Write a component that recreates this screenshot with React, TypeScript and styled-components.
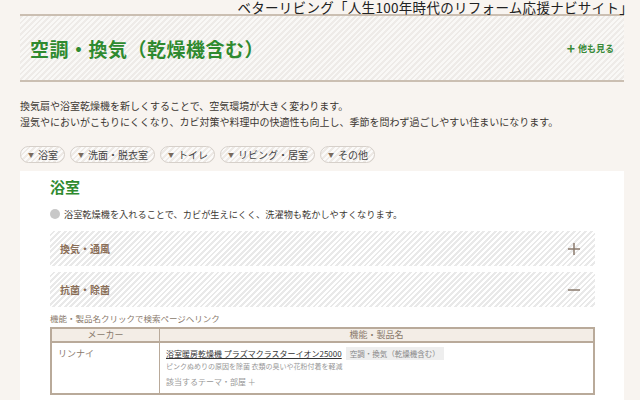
import React from 'react';
import styled, { createGlobalStyle } from 'styled-components';

const GlobalStyle = createGlobalStyle`
  html, body {
    margin: 0;
    padding: 0;
    background: #f8f4f0;
    font-family: "Noto Sans CJK JP", "Noto Sans", sans-serif;
    color: #3a3a3a;
  }
`;

const stripes = (a: string, b: string) => `repeating-linear-gradient(-45deg, ${a} 0 2px, ${b} 2px 4px)`;

const Page = styled.div`
  width: 640px;
  height: 400px;
  overflow: hidden;
`;

const SiteTitle = styled.div`
  font-size: 13.5px;
  line-height: 15px;
  height: 15px;
  margin-bottom: -1px;
  text-align: right;
  padding-right: 7px;
  color: #222;
  letter-spacing: 0.3px;
  white-space: nowrap;
`;

const Header = styled.div`
  margin: 0 16px 0 20px;
  height: 64px;
  border-top: 2px solid #cbbfb2;
  border-bottom: 2px solid #cbbfb2;
  background: ${stripes('#f9f8f6', '#eeebe8')};
  display: flex;
  align-items: center;
  justify-content: space-between;
  padding: 0 10px;
`;

const Title = styled.h1`
  margin: 0;
  font-size: 19px;
  font-weight: 700;
  color: #2f8a2f;
  letter-spacing: 0.5px;
`;

const MoreLink = styled.a`
  display: flex;
  align-items: center;
  gap: 3px;
  font-size: 9px;
  font-weight: 700;
  color: #3a8a3a;
`;

const Plus = styled.span`
  font-size: 14px;
  line-height: 1;
  font-weight: 700;
`;

const Lead = styled.p`
  margin: 16px 0 0 20px;
  font-size: 10px;
  line-height: 16px;
  color: #3d3833;
`;

const Tags = styled.div`
  display: flex;
  gap: 5px;
  margin: 16px 0 0 20px;
`;

const Tag = styled.span`
  display: inline-flex;
  align-items: center;
  gap: 4px;
  height: 15px;
  padding: 0 6px 0 7px;
  border: 1px solid #d6d0ca;
  border-radius: 9px;
  background: ${stripes('#fbfaf9', '#eeeae6')};
  font-size: 10px;
  color: #444;
`;

const Tri = styled.span`
  font-size: 6px;
  color: #7a6a5c;
`;

const Card = styled.section`
  margin: 8px 16px 0 20px;
  background: #fff;
  padding: 6px 29px 10px 30px;
  height: 226px;
`;

const SubTitle = styled.h2`
  margin: 0;
  font-size: 15px;
  line-height: 20px;
  font-weight: 700;
  color: #2f8a2f;
`;

const Note = styled.p`
  margin: 10px 0 0;
  display: flex;
  align-items: center;
  gap: 4px;
  font-size: 9.2px;
  color: #3d3833;
`;

const Dot = styled.span`
  width: 10px;
  height: 10px;
  border-radius: 50%;
  background: #c8c8c8;
`;

const Accordion = styled.div`
  margin-top: 10px;
  display: flex;
  flex-direction: column;
  gap: 6px;
`;

const AccRow = styled.div`
  height: 35px;
  background: ${stripes('#ffffff', '#e9e9e9')};
  display: flex;
  align-items: center;
  justify-content: space-between;
  padding: 0 15px 0 10px;
  font-size: 10px;
  font-weight: 700;
  color: #8a6e58;
`;

const Caption = styled.div`
  margin-top: 5px;
  font-size: 8.5px;
  color: #8a7a6c;
`;

const Table = styled.table`
  margin-top: 3px;
  width: 100%;
  border-collapse: collapse;
  border: 2px solid #b9aa9a;
  font-size: 9px;
`;

const Th = styled.th<{ $w?: number }>`
  width: ${({ $w }) => ($w ? `${$w}px` : 'auto')};
  background: #f3ede6;
  border: 1px solid #b9aa9a;
  border-bottom-width: 2px;
  font-weight: 400;
  color: #8a7a6c;
  height: 12px;
  line-height: 12px;
  padding: 0;
`;

const Td = styled.td`
  border: 1px solid #b9aa9a;
  vertical-align: top;
  padding: 5px 6px;
  color: #8a7a6c;
  height: 39px;
  line-height: 12px;
`;

const ProductLink = styled.a`
  font-size: 8px;
  color: #333;
  text-decoration: underline;
`;

const Chip = styled.span`
  margin-left: 4px;
  padding: 1px 4px;
  background: #eeeeee;
  font-size: 7.5px;
  color: #888;
`;

const Line = styled.div<{ $top?: number; $size: number }>`
  margin-top: ${({ $top }) => $top ?? 0}px;
  font-size: ${({ $size }) => $size}px;
  color: #999;
`;

const PlusMinus = ({ open }: { open?: boolean }) => (
  <svg width="12" height="12" viewBox="0 0 12 12">
    <path d={open ? 'M0 6h12' : 'M0 6h12M6 0v12'} stroke="#8a7a6c" strokeWidth="1.5" />
  </svg>
);

export default function App() {
  const tags = ['浴室', '洗面・脱衣室', 'トイレ', 'リビング・居室', 'その他'];
  return (
    <Page>
      <GlobalStyle />
      <SiteTitle>ベターリビング「人生100年時代のリフォーム応援ナビサイト」</SiteTitle>
      <Header>
        <Title>空調・換気（乾燥機含む）</Title>
        <MoreLink>
          <Plus>+</Plus>他も見る
        </MoreLink>
      </Header>
      <Lead>
        換気扇や浴室乾燥機を新しくすることで、空気環境が大きく変わります。
        <br />
        湿気やにおいがこもりにくくなり、カビ対策や料理中の快適性も向上し、季節を問わず過ごしやすい住まいになります。
      </Lead>
      <Tags>
        {tags.map((t) => (
          <Tag key={t}>
            <Tri>▼</Tri>
            {t}
          </Tag>
        ))}
      </Tags>
      <Card>
        <SubTitle>浴室</SubTitle>
        <Note>
          <Dot />
          浴室乾燥機を入れることで、カビが生えにくく、洗濯物も乾かしやすくなります。
        </Note>
        <Accordion>
          <AccRow>
            換気・通風
            <PlusMinus />
          </AccRow>
          <AccRow>
            抗菌・除菌
            <PlusMinus open />
          </AccRow>
        </Accordion>
        <Caption>機能・製品名クリックで検索ページへリンク</Caption>
        <Table>
          <thead>
            <tr>
              <Th $w={107}>メーカー</Th>
              <Th>機能・製品名</Th>
            </tr>
          </thead>
          <tbody>
            <tr>
              <Td>リンナイ</Td>
              <Td>
                <div>
                  <ProductLink>浴室暖房乾燥機 プラズマクラスターイオン25000</ProductLink>
                  <Chip>空調・換気（乾燥機含む）</Chip>
                </div>
                <Line $size={7}>ピンクぬめりの原因を除菌 衣類の臭いや花粉付着を軽減</Line>
                <Line $size={8} $top={4}>該当するテーマ・部屋 ＋</Line>
              </Td>
            </tr>
          </tbody>
        </Table>
      </Card>
    </Page>
  );
}
